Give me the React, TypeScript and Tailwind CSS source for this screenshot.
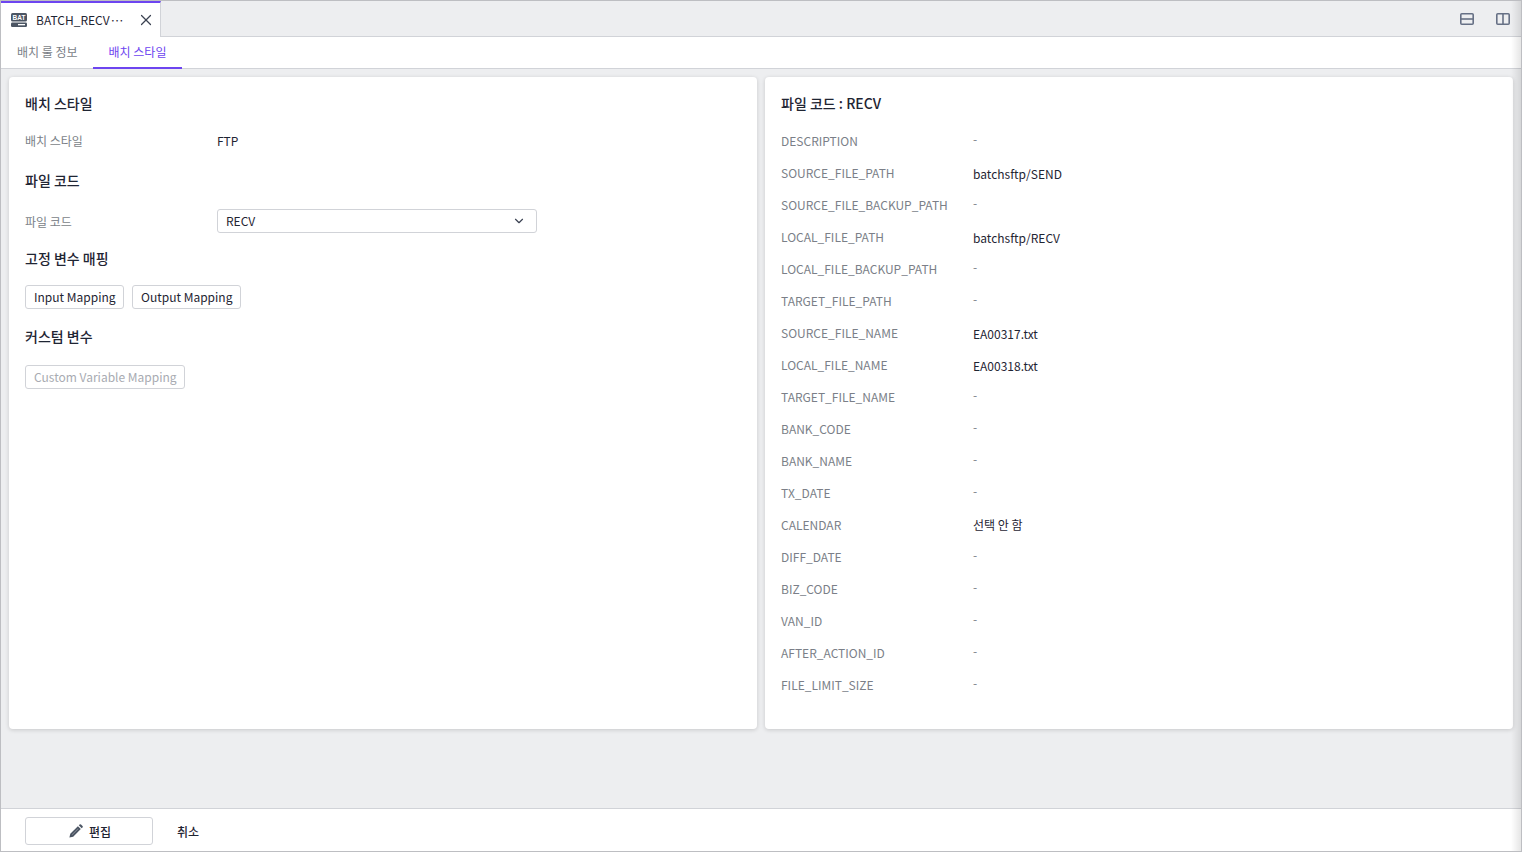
import { ChevronDown, X } from "lucide-react";

const font = "font-['Noto_Sans_CJK_KR','Noto_Sans',sans-serif]";

const rows = [
  ["DESCRIPTION", "-"],
  ["SOURCE_FILE_PATH", "batchsftp/SEND"],
  ["SOURCE_FILE_BACKUP_PATH", "-"],
  ["LOCAL_FILE_PATH", "batchsftp/RECV"],
  ["LOCAL_FILE_BACKUP_PATH", "-"],
  ["TARGET_FILE_PATH", "-"],
  ["SOURCE_FILE_NAME", "EA00317.txt"],
  ["LOCAL_FILE_NAME", "EA00318.txt"],
  ["TARGET_FILE_NAME", "-"],
  ["BANK_CODE", "-"],
  ["BANK_NAME", "-"],
  ["TX_DATE", "-"],
  ["CALENDAR", "선택 안 함"],
  ["DIFF_DATE", "-"],
  ["BIZ_CODE", "-"],
  ["VAN_ID", "-"],
  ["AFTER_ACTION_ID", "-"],
  ["FILE_LIMIT_SIZE", "-"],
];

function BatIcon() {
  return (
    <svg width="16" height="14" viewBox="0 0 16 14" className="shrink-0">
      <rect x="0" y="0" width="16" height="8.5" rx="1.5" fill="#4b5563" />
      <rect x="0" y="9.5" width="16" height="4.5" rx="1.2" fill="#4b5563" />
      <rect x="7" y="11" width="7" height="1.3" fill="#fff" />
      <text x="8" y="7" textAnchor="middle" fontSize="6.5" fontWeight="700" fill="#fff" fontFamily="Liberation Sans">BAT</text>
    </svg>
  );
}

function PencilIcon() {
  return (
    <svg width="14" height="14" viewBox="0 0 14 14" fill="#4b5563" className="shrink-0">
      <path d="M0.4 13.6l0.9-3.8L8.9 2.2l2.9 2.9-7.6 7.6z" />
      <path d="M9.8 1.3l0.8-0.8a1 1 0 0 1 1.4 0l1.5 1.5a1 1 0 0 1 0 1.4l-0.8 0.8z" />
      <path d="M2.9 10.5L8.9 4.5l0.5 0.5-6 6z" fill="#8b909a" />
    </svg>
  );
}

function SectionTitle({ children }: { children: React.ReactNode }) {
  return <h3 className="text-[14px] leading-[20px] font-medium text-[#1f2533]">{children}</h3>;
}

function OutlineButton({ label, width, disabled }: { label: string; width: string; disabled?: boolean }) {
  return (
    <button
      className={`h-6 rounded-[3px] border border-[#d1d3d8] bg-white pl-2 text-left text-[12px] leading-none ${width} ${
        disabled ? "text-[#a8abb2]" : "text-[#1f2533]"
      }`}
    >
      {label}
    </button>
  );
}

export default function App() {
  return (
    <div className={`${font} relative flex h-[852px] w-[1522px] flex-col border border-[#bdbec2] bg-[#edeef0] text-[12px]`}>
      <div className="flex h-9 shrink-0 items-stretch border-b border-[#d1d3d8]">
        <div className="-mb-px flex w-[160px] items-center border-t-2 border-r border-t-[#6d45f0] border-r-[#d1d3d8] bg-white pl-[10px]">
          <BatIcon />
          <span className="ml-[9px] w-[89px] text-[12px] whitespace-nowrap text-[#1f2533]">
            BATCH_RECV<span className="tracking-[-2.5px]">···</span>
          </span>
          <X size={18} strokeWidth={1.6} className="ml-[12px] text-[#3b4252]" />
        </div>
        <div className="ml-auto flex items-center gap-[22px] pr-[11px]">
          <svg width="14" height="12" viewBox="0 0 14 12" fill="none" stroke="#667085" strokeWidth="1.6">
            <rect x="0.8" y="0.8" width="12.4" height="10.4" rx="1" />
            <path d="M1 6h12" />
          </svg>
          <svg width="14" height="12" viewBox="0 0 14 12" fill="none" stroke="#667085" strokeWidth="1.6">
            <rect x="0.8" y="0.8" width="12.4" height="10.4" rx="1" />
            <path d="M7 1v10" />
          </svg>
        </div>
      </div>

      <div className="flex h-8 shrink-0 items-stretch border-b border-[#d1d3d8] bg-white text-[12px]">
        <div className="flex w-[92px] items-center pb-[2px] pl-4 text-[#7b7f88]">배치 룰 정보</div>
        <div className="-mb-px flex w-[89px] items-center justify-center border-b-2 border-[#6d45f0] text-[#6d45f0]">
          배치 스타일
        </div>
      </div>

      <div className="flex flex-1 gap-2 px-2 pt-2">
        <section className="h-[652px] w-[748px] rounded-[4px] bg-white px-4 pt-4 shadow-[0_1px_4px_rgba(0,0,0,0.16)]">
          <SectionTitle>배치 스타일</SectionTitle>
          <div className="mt-[18px] flex h-5 items-center">
            <span className="w-[192px] text-[#7b7f88]">배치 스타일</span>
            <span className="text-[#1f2533]">FTP</span>
          </div>
          <div className="mt-[19px]">
            <SectionTitle>파일 코드</SectionTitle>
          </div>
          <div className="mt-[19px] flex h-6 items-center">
            <span className="w-[192px] pt-[2px] text-[#7b7f88]">파일 코드</span>
            <div className="flex h-6 w-[320px] items-center justify-between rounded-[3px] border border-[#d1d3d8] pr-[10px] pl-2 text-[#1f2533]">
              RECV
              <ChevronDown size={14} strokeWidth={2} className="text-[#3b4252]" />
            </div>
          </div>
          <div className="mt-[15px]">
            <SectionTitle>고정 변수 매핑</SectionTitle>
          </div>
          <div className="mt-[17px] flex gap-2">
            <OutlineButton label="Input Mapping" width="w-[99px]" />
            <OutlineButton label="Output Mapping" width="w-[109px]" />
          </div>
          <div className="mt-[17px]">
            <SectionTitle>커스텀 변수</SectionTitle>
          </div>
          <div className="mt-[19px] flex">
            <OutlineButton label="Custom Variable Mapping" width="w-[160px]" disabled />
          </div>
        </section>

        <section className="h-[652px] w-[748px] rounded-[4px] bg-white px-4 pt-4 shadow-[0_1px_4px_rgba(0,0,0,0.16)]">
          <SectionTitle>파일 코드 : RECV</SectionTitle>
          <div className="mt-[12px] flex flex-col">
            {rows.map(([name, value]) => (
              <div key={name} className="flex h-8 items-center">
                <span className="w-[192px] text-[#7b7f88]">{name}</span>
                {value === "-" ? (
                  <span className="mb-[4px] text-[#7b7f88]">{value}</span>
                ) : (
                  <span className={value === "선택 안 함" ? "text-[#1f2533]" : "mt-[2px] text-[#1f2533]"}>{value}</span>
                )}
              </div>
            ))}
          </div>
        </section>
      </div>

      <div className="flex h-[43px] shrink-0 items-center border-t border-[#d1d3d8] bg-white pt-[2px] pl-6">
        <button className="flex h-7 w-[128px] items-center justify-center gap-[6px] rounded-[3px] border border-[#d1d3d8] pl-[2px] text-[12px] font-medium text-[#1f2533]">
          <PencilIcon />
          <span className="pt-[2px]">편집</span>
        </button>
        <button className="ml-6 pt-[2px] text-[12px] font-medium text-[#1f2533]">취소</button>
      </div>

      <div className="pointer-events-none absolute top-0 right-0 bottom-0 w-[10px] bg-gradient-to-l from-black/10 to-transparent" />
    </div>
  );
}
